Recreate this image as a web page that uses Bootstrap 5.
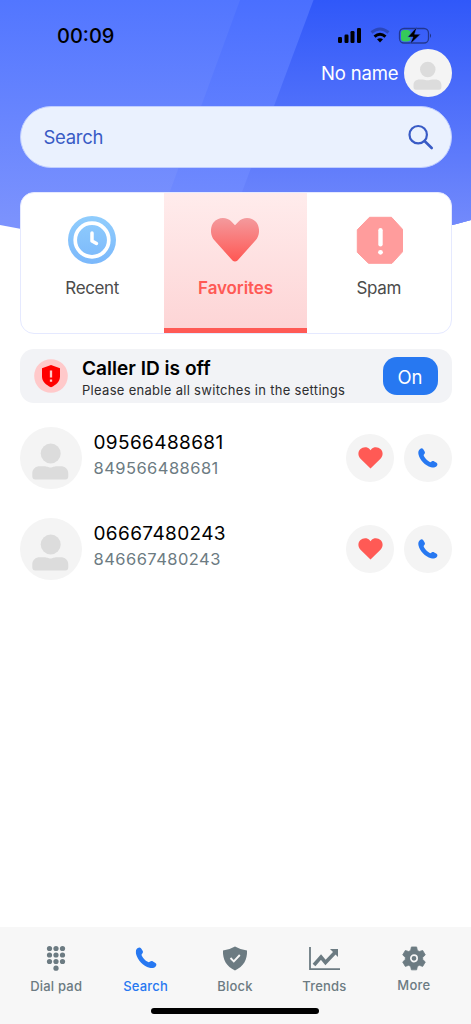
<!DOCTYPE html>
<html lang="en">
<head>
<meta charset="utf-8">
<meta name="viewport" content="width=device-width, initial-scale=1">
<title>Favorites</title>
<link href="https://cdn.jsdelivr.net/npm/bootstrap@5.3.0/dist/css/bootstrap.min.css" rel="stylesheet">
<style>
body{font-family:Inter,"Liberation Sans",sans-serif;color:#000;background:#fff;line-height:1.2}
svg{display:block;flex-shrink:0}
.phone{height:1024px;width:471px;overflow:hidden;isolation:isolate}
.hero-art{position:absolute;inset:0 0 auto 0;z-index:-1}
.status{height:48px;padding:23px 38px 0 57px}
.clock{font-size:20px;font-weight:500;line-height:26px}
.profile{height:49px;padding-right:19.5px;gap:5px}
.profile span{font-size:18.5px;color:#fff;letter-spacing:-.15px;padding-top:1px}
.searchbar{height:62px;margin:9px 19.5px 0;padding:0 17px 0 23px;border-radius:31px;background:#eaf1fe;border:1px solid #c0ceff;color:#395bc5;font-size:18.5px}
.searchbar span{letter-spacing:-.3px;padding-top:1px}
.tabs{height:142px;margin:24px 19.5px 0;border:1.5px solid #e5e9ff;border-radius:14px;background:#fff;overflow:hidden}
.tabs a{color:#4b4b4b;text-decoration:none;font-size:17px;padding-top:22.7px;flex:1 1 0;line-height:22px;letter-spacing:-.35px}
.tabs svg{margin-bottom:13.3px}
.tabs a.current{color:#ff5a55;font-weight:600;letter-spacing:-.1px;background:linear-gradient(#ffecec,#fdd5d6);border-bottom:5px solid #ff5a55}
.notice{height:54px;margin:15px 19.5px 0;padding:0 14px;border-radius:14px;background:#f2f3f6}
.notice-text{margin-left:14.5px;padding-top:8px}
.notice h1{font-size:19.1px;font-weight:600;line-height:22px;margin:0;letter-spacing:0}
.notice p{font-size:13px;line-height:20px;margin:1px 0 0;color:#2d2d2f;letter-spacing:.3px}
.btn-on{width:55px;height:38px;border-radius:14px;background:#2778f1;color:#fff;font-size:18.5px;line-height:36px;padding:1px 0 0;border:0}
.btn-on:hover{background:#1c69dc;color:#fff}
.contacts{margin:24px 19.5px 0;gap:29px}
.contacts li{height:62px}
.who{padding:0 0 7px 12px}
.num{font-size:19px;line-height:24px;letter-spacing:.38px}
.sub{font-size:16.5px;line-height:22px;color:#6c7b82;margin-top:2px;letter-spacing:.45px}
.round-btn{width:48px;height:48px;border-radius:50%;background:#f4f4f4;border:0;padding:0;margin-left:9.5px}
.bottom{height:97px;background:#f7f7f7;padding:16px 12.500px 0 11.500px}
.bottom a{flex:1 1 0;font-size:13px;line-height:18px;color:#6c7b82;text-decoration:none;letter-spacing:.2px;font-weight:500}
.bottom a.current{color:#2778f1}
.bottom svg{margin-bottom:4px}
.home{width:168px;height:6px;border-radius:3px;background:#000;margin-bottom:10px}
</style>
</head>
<body>
<svg width="0" height="0" class="position-absolute">
  <symbol id="person" viewBox="0 0 62 62"><circle cx="31" cy="31" r="31" fill="#f4f4f4"/><circle cx="30.700" cy="26.500" r="10" fill="#dcdcdc"/><path d="M12.300 49v-2.500C12.300 42 15.500 39.300 20 39.300h4c3.500 0 4 1.200 6.500 1.200s3-1.200 6.500-1.200h3.500c4.500 0 7.800 2.700 7.800 7.200v2.500c0 2.500-1 3.500-3 3.500H15.300c-2 0-3-1-3-3.500z" fill="#dcdcdc"/></symbol>
  <symbol id="phone" viewBox="0 0 22 22"><path d="M2.300 1C3.500.2 4.800.1 5.600 1.200L7.300 3.900C7.900 4.900 7.700 5.900 7 6.600C6.200 7.400 6 8 6.600 9.100C8 11.600 9.700 13.400 12.500 15.200C13.400 15.800 14.100 15.600 14.900 14.900C15.900 14.200 16.900 14.200 17.900 14.800L20.400 16.300C21.700 17.200 21.600 18.600 20.600 19.900C19.300 21.400 17 22 14.300 21.200C7.700 19.200 2 13.200.5 6.800C0 4.300.5 2.200 2.300 1z" fill="#2778f1"/></symbol>
  <symbol id="heart" viewBox="0 0 24 22"><path d="M12 21.500 2 11.800C-.8 9-.7 4.700 1.700 2.300C4.400-.5 9-.4 11 2.100L12 3.200l1-1.100C15-.4 19.600-.5 22.300 2.300c2.400 2.400 2.500 6.700-.3 9.500z" fill="#ff5a55"/></symbol>
</svg>
<div class="phone d-flex flex-column position-relative">
  <svg class="hero-art" width="471" height="250" viewBox="0 0 471 250">
    <defs>
      <linearGradient id="ga" x2="0" y2="1"><stop stop-color="#5276ff"/><stop offset="1" stop-color="#7e94fd"/></linearGradient>
      <linearGradient id="gb" x2="0" y2="1"><stop stop-color="#4a6fff"/><stop offset="1" stop-color="#778ffe"/></linearGradient>
      <linearGradient id="gc" x2="0" y2="1"><stop stop-color="#3058f9"/><stop offset="1" stop-color="#758cfc"/></linearGradient>
      <clipPath id="edge"><path d="M0 0H471V220Q420 235 340 240H100Q50 235 0 225z"/></clipPath>
    </defs>
    <g clip-path="url(#edge)"><path d="M0 0H471V235H0z" fill="url(#ga)"/><path d="M240 0H471V235H154z" fill="url(#gb)"/><path d="M313.500 0H471V235H226z" fill="url(#gc)"/></g>
  </svg>

  <div class="status d-flex justify-content-between align-items-start">
    <span class="clock">00:09</span>
    <svg width="96" height="26" viewBox="0 0 96 26">
      <g><rect x="1" y="14" width="4" height="6" rx="1.200"/><rect x="7.500" y="11.500" width="4" height="8.500" rx="1.200"/><rect x="13.500" y="8" width="4" height="12" rx="1.200"/><rect x="20" y="5" width="4" height="15" rx="1.200"/></g>
      <g fill="none" stroke-width="3"><path d="M34.500 9.500Q43 2.500 51.500 9.500" stroke="#000" stroke-opacity=".25"/><path d="M37.500 13.600Q43 9 48.500 13.600" stroke="#000"/></g><path d="M40 16.300q3-2.200 6 0L43 19.500z"/>
      <rect x="62.500" y="5.500" width="29" height="14.500" rx="4.500" fill="none" stroke="#000" stroke-opacity=".42" stroke-width="1.300"/><path d="M93 10.500q2 2 0 4.500z" opacity=".5"/>
      <rect x="64" y="7" width="9.500" height="11.500" rx="3.200" fill="#35cb59"/><path d="M80 3.800 70.800 14h5.200l-3 7.200 10.500-10h-5.900z" stroke="#3b61fa" stroke-width=".5"/>
    </svg>
  </div>
  <div class="profile d-flex justify-content-end align-items-center"><span>No name</span><svg width="48" height="48"><use href="#person"/></svg></div>

  <div class="searchbar d-flex justify-content-between align-items-center"><span>Search</span>
    <svg width="26" height="26" viewBox="0 0 26 26" fill="none" stroke="#395bc5" stroke-linecap="round"><circle cx="10.200" cy="10.700" r="8.700" stroke-width="2.200"/><path d="m16.800 17.300 6.900 6.700" stroke-width="2.600"/></svg>
  </div>

  <nav class="tabs d-flex">
    <a href="#" class="d-flex flex-column align-items-center">
      <svg width="48" height="48" viewBox="0 0 48 48"><defs><linearGradient id="clk" x2="0" y2="1"><stop stop-color="#90cdfd"/><stop offset="1" stop-color="#7bb8fb"/></linearGradient></defs><circle cx="24" cy="24" r="24" fill="url(#clk)"/><circle cx="24" cy="24" r="16.800" fill="none" stroke="#fff" stroke-width="3.700"/><path d="M24 17v8l4.500 2.500" fill="none" stroke="#fff" stroke-width="3.500" stroke-linecap="round" stroke-linejoin="round"/></svg>Recent</a>
    <a href="#" class="current d-flex flex-column align-items-center">
      <svg width="48" height="48" viewBox="0 0 48 48"><defs><linearGradient id="hrt" x2="0" y2="1"><stop stop-color="#f49a9d"/><stop offset="1" stop-color="#ff5753"/></linearGradient></defs><path d="M21.500 44.500 3.600 24.600C-1.100 19.400-1 11.300 2.500 6.600 7 .7 15.800.6 20.600 5.700L24 9.300l3.400-3.600C32.200.6 41 .7 45.500 6.600c3.500 4.700 3.600 12.800-1.100 18L26.500 44.500q-2.500 2.200-5 0z" fill="url(#hrt)"/></svg>Favorites</a>
    <a href="#" class="d-flex flex-column align-items-center">
      <svg width="48" height="48" viewBox="0 0 48 48"><g transform="translate(1 .3)"><path d="M13.500 1h22L46.500 13v22.500L36 47H12.500L1.300 36V13.500z" fill="#ff9c9c" stroke="#ff9c9c" stroke-linejoin="round"/><path d="M24.500 14v14" stroke="#fff" stroke-width="4.400" stroke-linecap="round"/><circle cx="24.500" cy="36" r="2.400" fill="#fff"/></g></svg>Spam</a>
  </nav>

  <div class="notice d-flex">
    <svg class="align-self-center" width="34" height="34" viewBox="0 0 34 34"><circle cx="17" cy="17" r="16.800" fill="#ffc9ca"/><path d="M17 6 26 9.200v8.300c0 5-4 8.500-9 10.800-5-2.300-9-5.800-9-10.800V9.200z" fill="#f00"/><path d="M17 11.500v7M17 20.500v2.300" stroke="#ffc9ca" stroke-width="2.300"/></svg>
    <div class="flex-grow-1 notice-text"><h1>Caller ID is off</h1><p>Please enable all switches in the settings</p></div>
    <button class="btn btn-on align-self-center">On</button>
  </div>

  <ul class="contacts list-unstyled d-flex flex-column">
    <li class="d-flex align-items-center"><svg width="62" height="62"><use href="#person"/></svg>
      <div class="flex-grow-1 who"><div class="num">09566488681</div><div class="sub">849566488681</div></div>
      <button class="round-btn d-flex align-items-center justify-content-center"><svg width="25" height="22"><use href="#heart"/></svg></button>
      <button class="round-btn d-flex align-items-center justify-content-center"><svg width="20" height="20"><use href="#phone"/></svg></button></li>
    <li class="d-flex align-items-center"><svg width="62" height="62"><use href="#person"/></svg>
      <div class="flex-grow-1 who"><div class="num">06667480243</div><div class="sub">846667480243</div></div>
      <button class="round-btn d-flex align-items-center justify-content-center"><svg width="25" height="22"><use href="#heart"/></svg></button>
      <button class="round-btn d-flex align-items-center justify-content-center"><svg width="20" height="20"><use href="#phone"/></svg></button></li>
  </ul>

  <footer class="bottom mt-auto d-flex flex-column align-items-center">
    <nav class="d-flex w-100">
      <a href="#" class="d-flex flex-column align-items-center"><svg width="30" height="30" viewBox="0 0 30 30" fill="currentColor"><circle cx="8.500" cy="5.500" r="2.600"/><circle cx="15" cy="5.500" r="2.600"/><circle cx="21.500" cy="5.500" r="2.600"/><circle cx="8.500" cy="12" r="2.600"/><circle cx="15" cy="12" r="2.600"/><circle cx="21.500" cy="12" r="2.600"/><circle cx="8.500" cy="18.500" r="2.600"/><circle cx="15" cy="18.500" r="2.600"/><circle cx="21.500" cy="18.500" r="2.600"/><circle cx="15" cy="25.200" r="2.600"/></svg>Dial pad</a>
      <a href="#" class="current d-flex flex-column align-items-center"><svg width="30" height="30" viewBox="0 0 30 30"><use href="#phone" x="4.500" y="4" width="21.500" height="21.500"/></svg>Search</a>
      <a href="#" class="d-flex flex-column align-items-center"><svg width="30" height="30" viewBox="0 0 30 30"><path d="M15 3.500q6 3.500 12 4c.5 9-3.500 16-12 20C6.500 23.500 2.500 16.500 3 7.500q6-.5 12-4z" fill="currentColor"/><path d="m10.500 15 3.300 3.300 6-6.300" fill="none" stroke="#f7f7f7" stroke-width="1.900"/></svg>Block</a>
      <a href="#" class="d-flex flex-column align-items-center"><svg width="32" height="30" viewBox="0 0 32 30" fill="none" stroke="currentColor"><path d="M2 4v22.200h30" stroke-width="1.800"/><path d="m6 22 7-8 4.500 5.500L27 9.500" stroke-width="3.600"/><path d="M22 6h8v8z" fill="currentColor" stroke="none"/></svg>Trends</a>
      <a href="#" class="d-flex flex-column align-items-center"><svg width="30" height="29" viewBox="0 0 30 30"><path d="m12.300 4.500h5.400l.8 3.600 2 1.100 3.500-1.100 2.700 4.600-2.700 2.500v2.300l2.700 2.500-2.700 4.600-3.500-1.100-2 1.100-.8 3.600h-5.400l-.8-3.600-2-1.100-3.500 1.100-2.700-4.600L6 17.500v-2.300l-2.700-2.500L6 8.100l3.500 1.100 2-1.100z" transform="translate(0 -.4)" fill="currentColor" stroke="currentColor" stroke-width=".8" stroke-linejoin="round"/><circle cx="15" cy="15.900" r="3.300" fill="none" stroke="#f7f7f7" stroke-width="1.700"/></svg>More</a>
    </nav>
    <div class="home mt-auto"></div>
  </footer>
</div>
<script src="https://cdn.jsdelivr.net/npm/bootstrap@5.3.0/dist/js/bootstrap.bundle.min.js"></script>
</body>
</html>
